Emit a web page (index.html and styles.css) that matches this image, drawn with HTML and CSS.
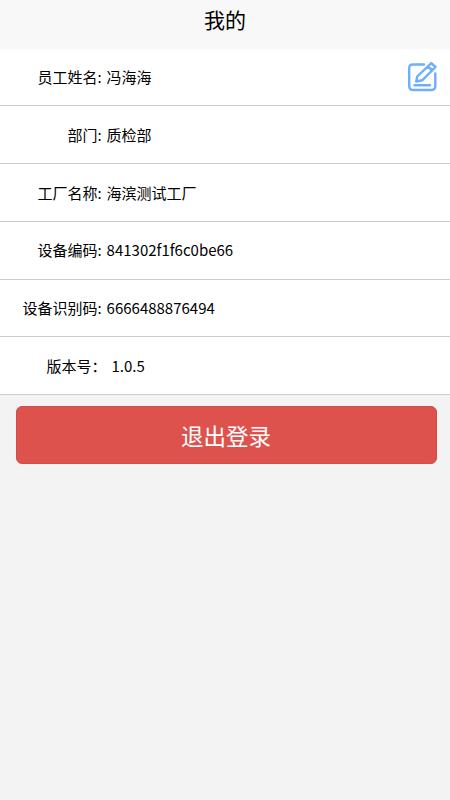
FILE: index.html
```html
<!DOCTYPE html>
<html lang="zh-CN">
<head>
<meta charset="utf-8">
<title>我的</title>
<link rel="stylesheet" href="styles.css">
</head>
<body>
<header class="header">我的</header>
<main>
<div class="row"><span class="label">员工姓名:</span><span class="value">冯海海</span>
<svg class="edit" viewBox="0 0 32 32" fill="none" stroke="#6eaefa" stroke-width="2.4" stroke-linecap="round" stroke-linejoin="round"><path d="M18 3.500H7Q3.200 3.500 3.200 7.500V25Q3.200 29 7 29H25.500Q29.300 29 29.300 25V12.500"/><path d="M25.300 2.200L29.500 6L16.200 19.300L10.200 20.500L11.200 15.500ZM22 5.500L26.300 9.500M8.500 24.200H24"/></svg></div>
<div class="row"><span class="label">部门:</span><span class="value">质检部</span></div>
<div class="row"><span class="label">工厂名称:</span><span class="value">海滨测试工厂</span></div>
<div class="row"><span class="label">设备编码:</span><span class="value">841302f1f6c0be66</span></div>
<div class="row"><span class="label">设备识别码:</span><span class="value">6666488876494</span></div>
<div class="row"><span class="label version">版本号：</span><span class="value">1.0.5</span></div>
<button class="logout">退出登录</button>
</main>
</body>
</html>
```
FILE: styles.css
```css
* { box-sizing: border-box; }
body { margin: 0; min-height: 800px; background: #f3f3f3; color: #000; font: 15px/22px "Noto Sans CJK SC", sans-serif; }
.header { height: 48.8px; background: #f8f8f8; font-size: 21px; line-height: 39px; text-align: center; }
.row { display: flex; align-items: center; height: 57.7px; background: #fff; border-bottom: 1px solid #ccc; }
.label { width: 101.6px; text-align: right; white-space: nowrap; }
.value { margin-left: 5px; }
.version { width: 106.4px; }
.edit { width: 32px; height: 32px; margin-left: auto; margin-right: 12px; }
.logout { display: block; width: 421px; height: 58px; margin: 11px 0 0 15.6px; padding: 0; border: 1px solid #d14d48; border-radius: 6px; background: #dd524d; color: #fff; font: 22.500px/56px "Noto Sans CJK SC", sans-serif; }
```
